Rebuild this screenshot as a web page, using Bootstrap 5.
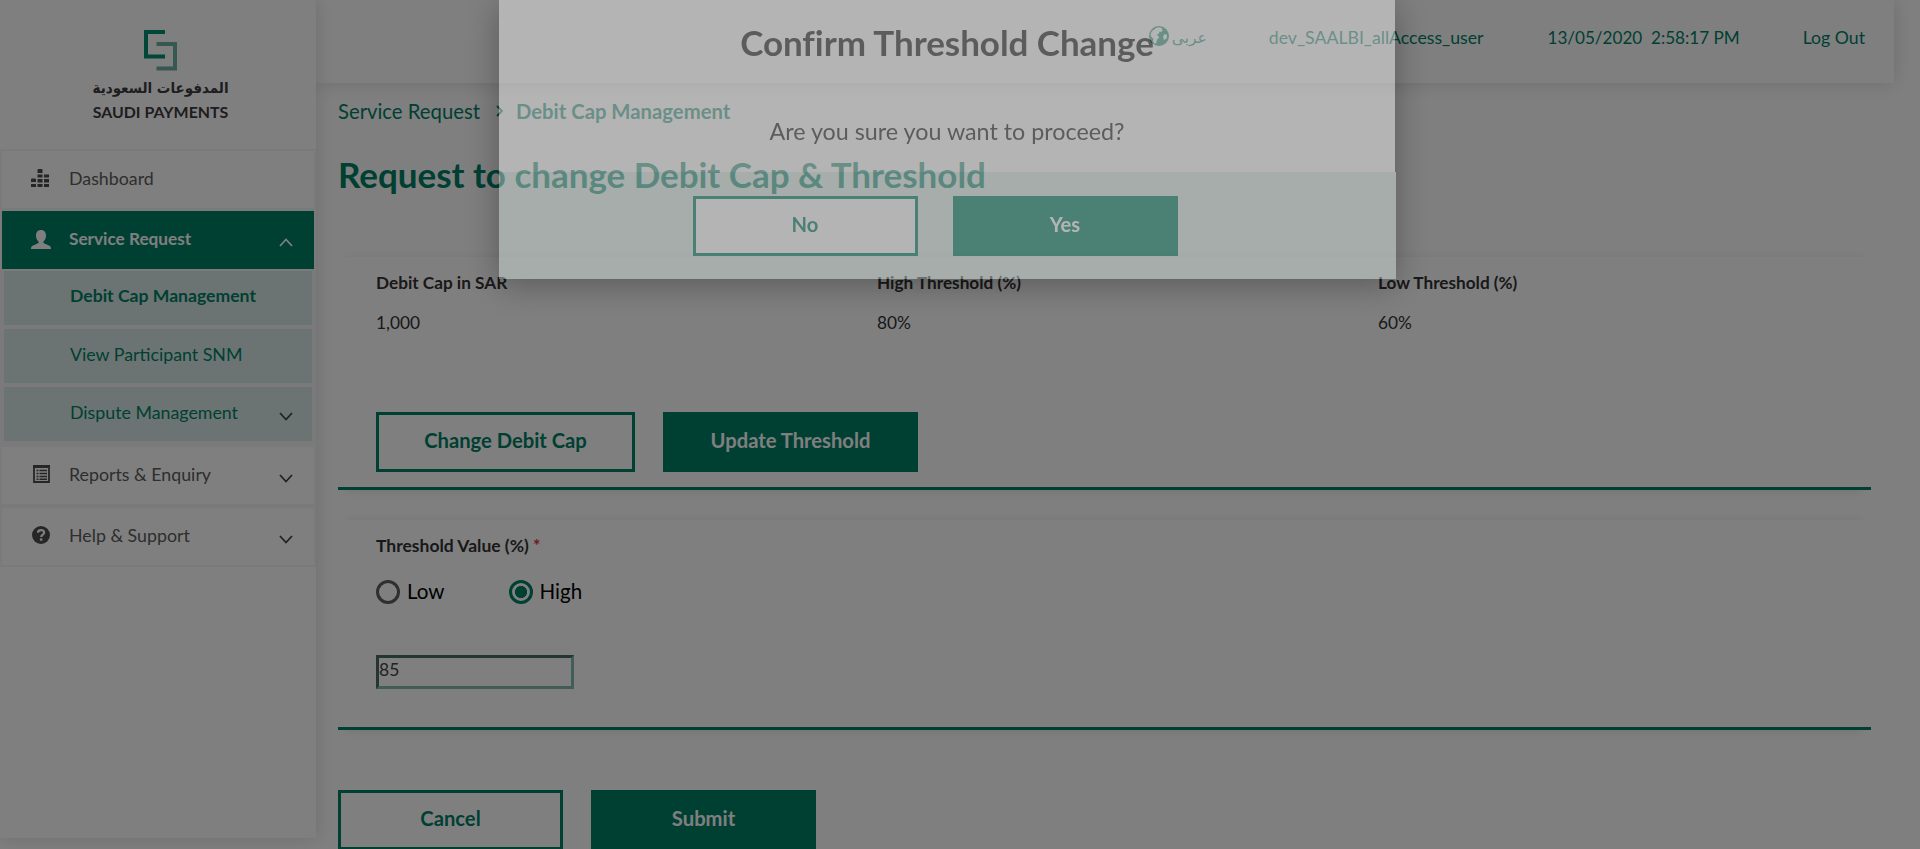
<!DOCTYPE html>
<html lang="en">
<head>
<meta charset="utf-8">
<title>Saudi Payments – Debit Cap Management</title>
<link href="https://cdn.jsdelivr.net/npm/bootstrap@5.3.0/dist/css/bootstrap.min.css" rel="stylesheet">
<style>
:root{--sp-green:#008066;--sp-mint:#d6e9e4;--sp-line:#f4f4f4}
body{font-family:Lato,"DejaVu Sans",sans-serif;font-size:18px;line-height:22px;color:#333;background:#fff;height:849px;overflow:hidden}
a{color:inherit;text-decoration:none}
.side{width:316px;height:838px;box-shadow:0 0 18px rgba(0,0,0,.15);z-index:2;background:#fff}
.brand-box{height:149px;padding:30px 0 0 5px;color:#3d3a3e}
.brand-box svg{display:block}
.brand-ar{font:bold 15px/20px "DejaVu Sans Condensed","DejaVu Sans",sans-serif;margin-top:7px;white-space:nowrap;height:20px}
.brand-en{font-size:15.9px;line-height:20px;font-weight:700;margin-top:4px}
.menu{border:2px solid var(--sp-line);background:var(--sp-line);gap:4px;color:#5c5c5c}
.menu-row{height:57px;background:#fff;padding:0 21px 4px 29px;font-size:17.8px}
.menu-row.on{height:58px;background:var(--sp-green);color:#fff;font-weight:700;margin-top:-1px;padding-bottom:2px;font-size:17.2px}
.menu-row .ico{width:20px;margin-right:18px;color:#4d4d4d}
.menu-row.on .ico{color:#fff}
.menu-row .ico.narrow{padding-left:2px}
.menu-row svg,.sub-row svg{display:block;flex:none}
.menu-row .chev,.sub-row .chev{margin-top:9px;color:#444}
.menu-row.on .chev{color:#fff;margin-top:7px}
.subs{gap:4px;margin:-2px 2px 2px}
.sub-row{height:54px;background:var(--sp-mint);color:var(--sp-green);padding:0 19px 5px 66px;font-size:17.8px}
.sub-row.now{font-size:17.6px;font-weight:700;padding-bottom:4px}
.top-bar{height:83px;width:1578px;padding:0 29px 7px 0;box-shadow:0 0 18px rgba(0,0,0,.15);color:var(--sp-green);font-size:17.7px}
.lang-ar{font:15.5px/20px "DejaVu Sans",sans-serif;width:35px;white-space:nowrap}
.globe{margin:-4px 3px 0 0}
.user{margin-left:62px}
.when{margin-left:64px;font-size:17.1px}
.out{margin-left:63px}
.crumb{padding:16px 0 0 22px;font-size:20.3px;line-height:24px;color:var(--sp-green)}
.crumb svg{margin:0 13px 0 16px}
.page-title{font-size:35px;letter-spacing:-.03px;line-height:42px;font-weight:700;color:var(--sp-green);margin:30px 0 0 22px}
.panel{margin-left:22px;width:1533px;border-bottom:3px solid var(--sp-green);padding:0 0 0 38px;box-shadow:0 -7px 9px -8px rgba(0,0,0,.1),0 9px 10px -8px rgba(0,0,0,.1)}
.panel-caps{margin-top:62px;height:233px;padding-top:15px}
.panel-value{margin-top:30px;height:210px;padding-top:15px}
.caps{display:grid;grid-template-columns:repeat(3,501px)}
.caps dt,.lbl{font-weight:700;font-size:17.5px}
.caps dt{font-size:17.2px}
.caps dd{margin:18px 0 0;font-size:17.3px}
.cap-actions{margin-top:78px;gap:28px}
.btn-sp{--bs-btn-border-radius:0;--bs-btn-border-width:3px;--bs-btn-border-color:var(--sp-green);--bs-btn-color:var(--sp-green);--bs-btn-bg:#fff;--bs-btn-padding-y:0;--bs-btn-padding-x:0;--bs-btn-font-size:20.2px;--bs-btn-font-weight:700;--bs-btn-line-height:24px;width:225px;height:60px;padding-bottom:4px}
.btn-sp.fill{--bs-btn-color:#fff;--bs-btn-bg:var(--sp-green)}
.wide-a{width:259px}
.wide-b{width:255px}
.opts{margin-top:23px;gap:64px}
.dot{width:24px;height:24px;border:3px solid #5e5e5e;border-radius:50%;background:#fff}
.dot.on{border-color:var(--sp-green);background:radial-gradient(circle,var(--sp-green) 5.7px,#fff 6.4px)}
.opt{gap:7px;font-size:20.6px;line-height:22px;color:#000}
.val{width:198px;height:34px;border:3px solid;border-color:#486a64 #83bbb0 #83bbb0 #486a64;padding:0 0 5px;font-size:17.5px;line-height:22px;color:#444;border-radius:0;background:#fff;display:block;margin-top:51px}
.form-actions{margin:60px 0 0 22px;gap:28px}
.dlg{opacity:.41;overflow:hidden}
.dlg .modal-dialog{width:896px;max-width:none;margin:0 0 0 499px}
.dlg .modal-content{border:0;border-radius:0;height:279px;box-shadow:0 5px 32px rgba(0,0,0,.75);color:#2b2b2b;text-align:center}
.dlg h2{font-size:35px;letter-spacing:-.05px;line-height:42px;font-weight:700;margin:21px 0 0}
.dlg p{font-size:23.3px;line-height:28px;margin:54px 0 0;height:55px}
.dlg-foot{width:897px;height:107px;background:#dceeea;gap:35px;padding:1px 25px 0 0}
</style>
</head>
<body>
<div class="d-flex">
  <aside class="side position-relative flex-shrink-0">
    <div class="brand-box d-flex flex-column align-items-center">
      <svg width="33" height="41" viewBox="0 0 33 41" fill="none" stroke-width="4"><path d="M21 2H2v24.500h19" stroke="#008c73"/><path d="M12.500 14H31v24.500H12.500" stroke="#6fb0a3"/></svg>
      <div class="brand-ar" lang="ar" dir="rtl">المدفوعات السعودية</div>
      <div class="brand-en">SAUDI PAYMENTS</div>
    </div>
    <nav class="menu d-flex flex-column">
      <a class="menu-row d-flex align-items-center" href="#"><span class="ico"><svg width="18" height="18" viewBox="0 0 18 18" fill="currentColor"><path d="M0 10.500q0-1 1-1h3q1 0 1 1V13H0zM0 15h5v3H0zM6.500 1q0-1 1-1h3q1 0 1 1v3h-5zM6.500 5.500h5V8.500h-5zM6.500 10h5v3.500h-5zM6.500 15h5v3h-5zM13 5.500h5v3h-5zM13 10h5v3.500h-5zM13 15h5v3h-5z"/></svg></span><span>Dashboard</span></a>
      <a class="menu-row on d-flex align-items-center" href="#"><span class="ico"><svg width="20" height="19" viewBox="0 0 20 19" fill="currentColor"><path d="M10 0c3.200 0 5 2.200 5 5.500 0 2.700-1.200 5-2.600 6.200v1.400l5.500 2.300C19.400 16 20 17 20 19H0c0-2 .6-3 2.100-3.600l5.500-2.300v-1.400C6.200 10.500 5 8.200 5 5.500 5 2.200 6.800 0 10 0z"/></svg></span><span>Service Request</span><svg class="chev ms-auto" width="14" height="9" viewBox="0 0 14 9" fill="none" stroke="currentColor" stroke-width="1.800"><path d="M1 8l6-6.500L13 8"/></svg></a>
      <div class="subs d-flex flex-column">
        <a class="sub-row now d-flex align-items-center" href="#">Debit Cap Management</a>
        <a class="sub-row d-flex align-items-center" href="#">View Participant SNM</a>
        <a class="sub-row d-flex align-items-center" href="#">Dispute Management<svg class="chev ms-auto" width="14" height="9" viewBox="0 0 14 9" fill="none" stroke="currentColor" stroke-width="1.800"><path d="M1 1l6 6.500L13 1"/></svg></a>
      </div>
      <a class="menu-row d-flex align-items-center" href="#"><span class="ico narrow"><svg width="17" height="18" viewBox="0 0 17 18" fill="none" stroke="currentColor"><path d="M1 1.500h15v15.500H1z" stroke-width="1.800"/><path d="M0 1.500h17" stroke-width="3"/><path d="M3.500 5.500h2M3.500 8.500h2M3.500 11.500h2M3.500 14.200h2M6.500 5.500h7.500M6.500 8.500h7.500M6.500 11.500h7.500M6.500 14.200h7.500" stroke-width="1.600"/></svg></span><span>Reports &amp; Enquiry</span><svg class="chev ms-auto" width="14" height="9" viewBox="0 0 14 9" fill="none" stroke="currentColor" stroke-width="1.800"><path d="M1 1l6 6.500L13 1"/></svg></a>
      <a class="menu-row d-flex align-items-center" href="#"><span class="ico"><svg class="mx-auto" width="18" height="18" viewBox="0 0 18 18"><circle cx="9" cy="9" r="9" fill="currentColor"/><path d="M6 6.800C6 5 7.200 4.200 9 4.200s3.100.9 3.100 2.500c0 2-2.900 2-2.900 4.300" fill="none" stroke="#fff" stroke-width="2.200"/><path d="M7.900 12.400h2.500v2.300H7.900z" fill="#fff"/></svg></span><span>Help &amp; Support</span><svg class="chev ms-auto" width="14" height="9" viewBox="0 0 14 9" fill="none" stroke="currentColor" stroke-width="1.800"><path d="M1 1l6 6.500L13 1"/></svg></a>
    </nav>
  </aside>
  <main class="flex-grow-1">
    <header class="top-bar d-flex align-items-center justify-content-end">
      <a class="d-flex align-items-center" href="#"><svg class="globe" width="20" height="20" viewBox="0 0 20 20"><circle cx="10" cy="10" r="9.300" fill="currentColor" stroke="currentColor" stroke-width="1.400"/><path d="M7 2l3-.8 3.500 1-1 1.300 1.500 1-2 1.500-1.500-.5-.5 2-2.500 1.500 2 1 .5 2-2 1.500-.5 3-1.500 1.500-2-2.500.5-2.500L2.500 11l-1-2 1-3.500zM15.500 8l2.500 1-.5 3.500-2.500 1.500-1-3z" fill="#fff"/></svg><span class="lang-ar" lang="ar">عربى</span></a>
      <span class="user">dev_SAALBI_allAccess_user</span>
      <span class="when">13/05/2020&nbsp; 2:58:17 PM</span>
      <a class="out" href="#">Log Out</a>
    </header>
    <nav class="crumb d-flex align-items-center"><a href="#">Service Request</a><svg width="7" height="12" viewBox="0 0 7 12" fill="none" stroke="currentColor" stroke-width="1.800"><path d="M1 1l5 5-5 5"/></svg><b>Debit Cap Management</b></nav>
    <h1 class="page-title">Request to change Debit Cap &amp; Threshold</h1>
    <section class="panel panel-caps">
      <dl class="caps mb-0">
        <div><dt>Debit Cap in SAR</dt><dd>1,000</dd></div>
        <div><dt>High Threshold (%)</dt><dd>80%</dd></div>
        <div><dt>Low Threshold (%)</dt><dd>60%</dd></div>
      </dl>
      <div class="cap-actions d-flex">
        <button class="btn btn-sp wide-a">Change Debit Cap</button>
        <button class="btn btn-sp fill wide-b">Update Threshold</button>
      </div>
    </section>
    <section class="panel panel-value">
      <div class="lbl">Threshold Value (%) <span class="text-danger">*</span></div>
      <div class="opts d-flex">
        <label class="opt d-flex"><span class="dot"></span><span>Low</span></label>
        <label class="opt d-flex"><span class="dot on"></span><span>High</span></label>
      </div>
      <input class="val" value="85" aria-label="Threshold value">
    </section>
    <div class="form-actions d-flex">
      <button class="btn btn-sp">Cancel</button>
      <button class="btn btn-sp fill">Submit</button>
    </div>
  </main>
</div>
<div class="modal-backdrop show"></div>
<div class="modal dlg d-block" role="dialog">
  <div class="modal-dialog">
    <div class="modal-content">
      <h2>Confirm Threshold Change</h2>
      <p>Are you sure you want to proceed?</p>
      <div class="dlg-foot d-flex align-items-center justify-content-center">
        <button class="btn btn-sp">No</button>
        <button class="btn btn-sp fill">Yes</button>
      </div>
    </div>
  </div>
</div>
<script src="https://cdn.jsdelivr.net/npm/bootstrap@5.3.0/dist/js/bootstrap.bundle.min.js"></script>
</body>
</html>
